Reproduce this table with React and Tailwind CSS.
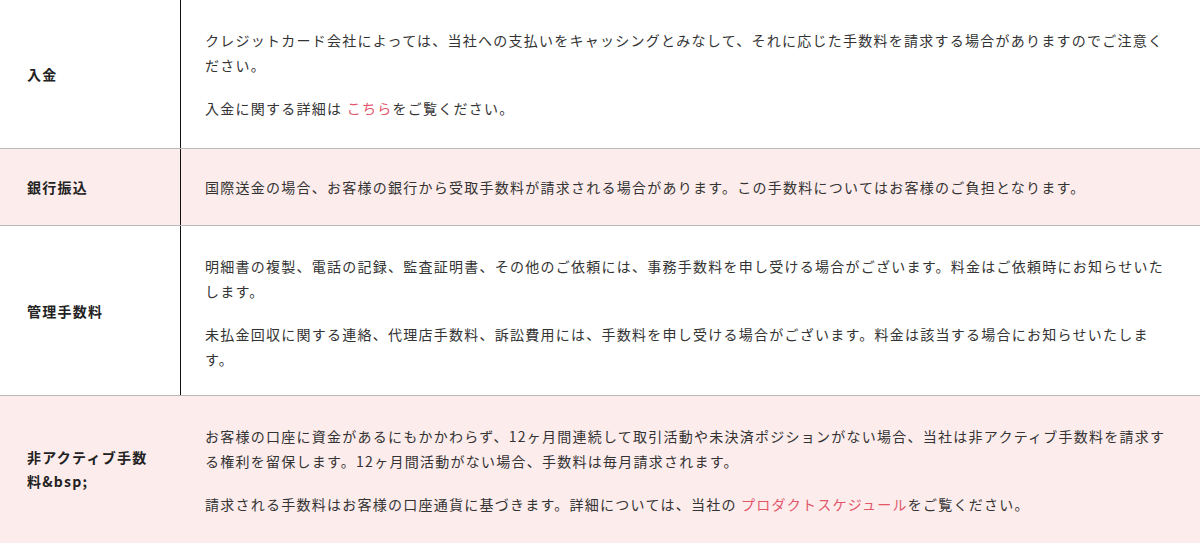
const FONT = "font-['Noto_Sans_CJK_JP','Noto_Sans',sans-serif]"

const ROWS = [
  {
    label: '入金',
    pink: false,
    pad: 'pt-[28px] pb-[27px]',
    body: [
      ['クレジットカード会社によっては、当社への支払いをキャッシングとみなして、それに応じた手数料を請求する場合がありますのでご注意ください。'],
      ['入金に関する詳細は ', { link: 'こちら' }, 'をご覧ください。'],
    ],
  },
  {
    label: '銀行振込',
    pink: true,
    pad: 'pt-[26px] pb-[26px]',
    body: [['国際送金の場合、お客様の銀行から受取手数料が請求される場合があります。この手数料についてはお客様のご負担となります。']],
  },
  {
    label: '管理手数料',
    pink: false,
    pad: 'pt-[28px] pb-[24px]',
    body: [
      ['明細書の複製、電話の記録、監査証明書、その他のご依頼には、事務手数料を申し受ける場合がございます。料金はご依頼時にお知らせいたします。'],
      ['未払金回収に関する連絡、代理店手数料、訴訟費用には、手数料を申し受ける場合がございます。料金は該当する場合にお知らせいたします。'],
    ],
  },
  {
    label: '非アクティブ手数料&bsp;',
    pink: true,
    noRule: true,
    pad: 'pt-[28px] pb-[26px]',
    body: [
      ['お客様の口座に資金があるにもかかわらず、12ヶ月間連続して取引活動や未決済ポジションがない場合、当社は非アクティブ手数料を請求する権利を留保します。12ヶ月間活動がない場合、手数料は毎月請求されます。'],
      ['請求される手数料はお客様の口座通貨に基づきます。詳細については、当社の ', { link: 'プロダクトスケジュール' }, 'をご覧ください。'],
    ],
  },
]

function Row({ row, first }) {
  return (
    <div className={`flex ${first ? '' : 'border-t border-[#b9b9b9]'} ${row.pink ? 'bg-[#fdecec]' : 'bg-white'}`}>
      <div className={`w-[181px] flex-shrink-0 flex items-center pl-[27px] pr-6 ${row.noRule ? 'pr-[25px]' : 'border-r border-[#111]'}`}>
        <span className="text-[14px] leading-[24px] font-bold text-[#222] tracking-[1.25px] break-all">{row.label}</span>
      </div>
      <div className={`flex-1 min-w-0 pl-6 pr-6 ${row.pad} flex flex-col gap-[19px]`}>
        {row.body.map((para, i) => (
          <p key={i} className="text-[14px] leading-[24.5px] text-[#333] tracking-[1.25px]">
            {para.map((part, j) =>
              typeof part === 'string'
                ? <span key={j}>{part}</span>
                : <a key={j} className="text-[#e2566a]">{part.link}</a>
            )}
          </p>
        ))}
      </div>
    </div>
  )
}

export default function App() {
  return (
    <div className={`w-[1200px] h-[545px] overflow-hidden bg-white ${FONT}`}>
      {ROWS.map((row, i) => (
        <Row key={row.label} row={row} first={i === 0} />
      ))}
    </div>
  )
}
